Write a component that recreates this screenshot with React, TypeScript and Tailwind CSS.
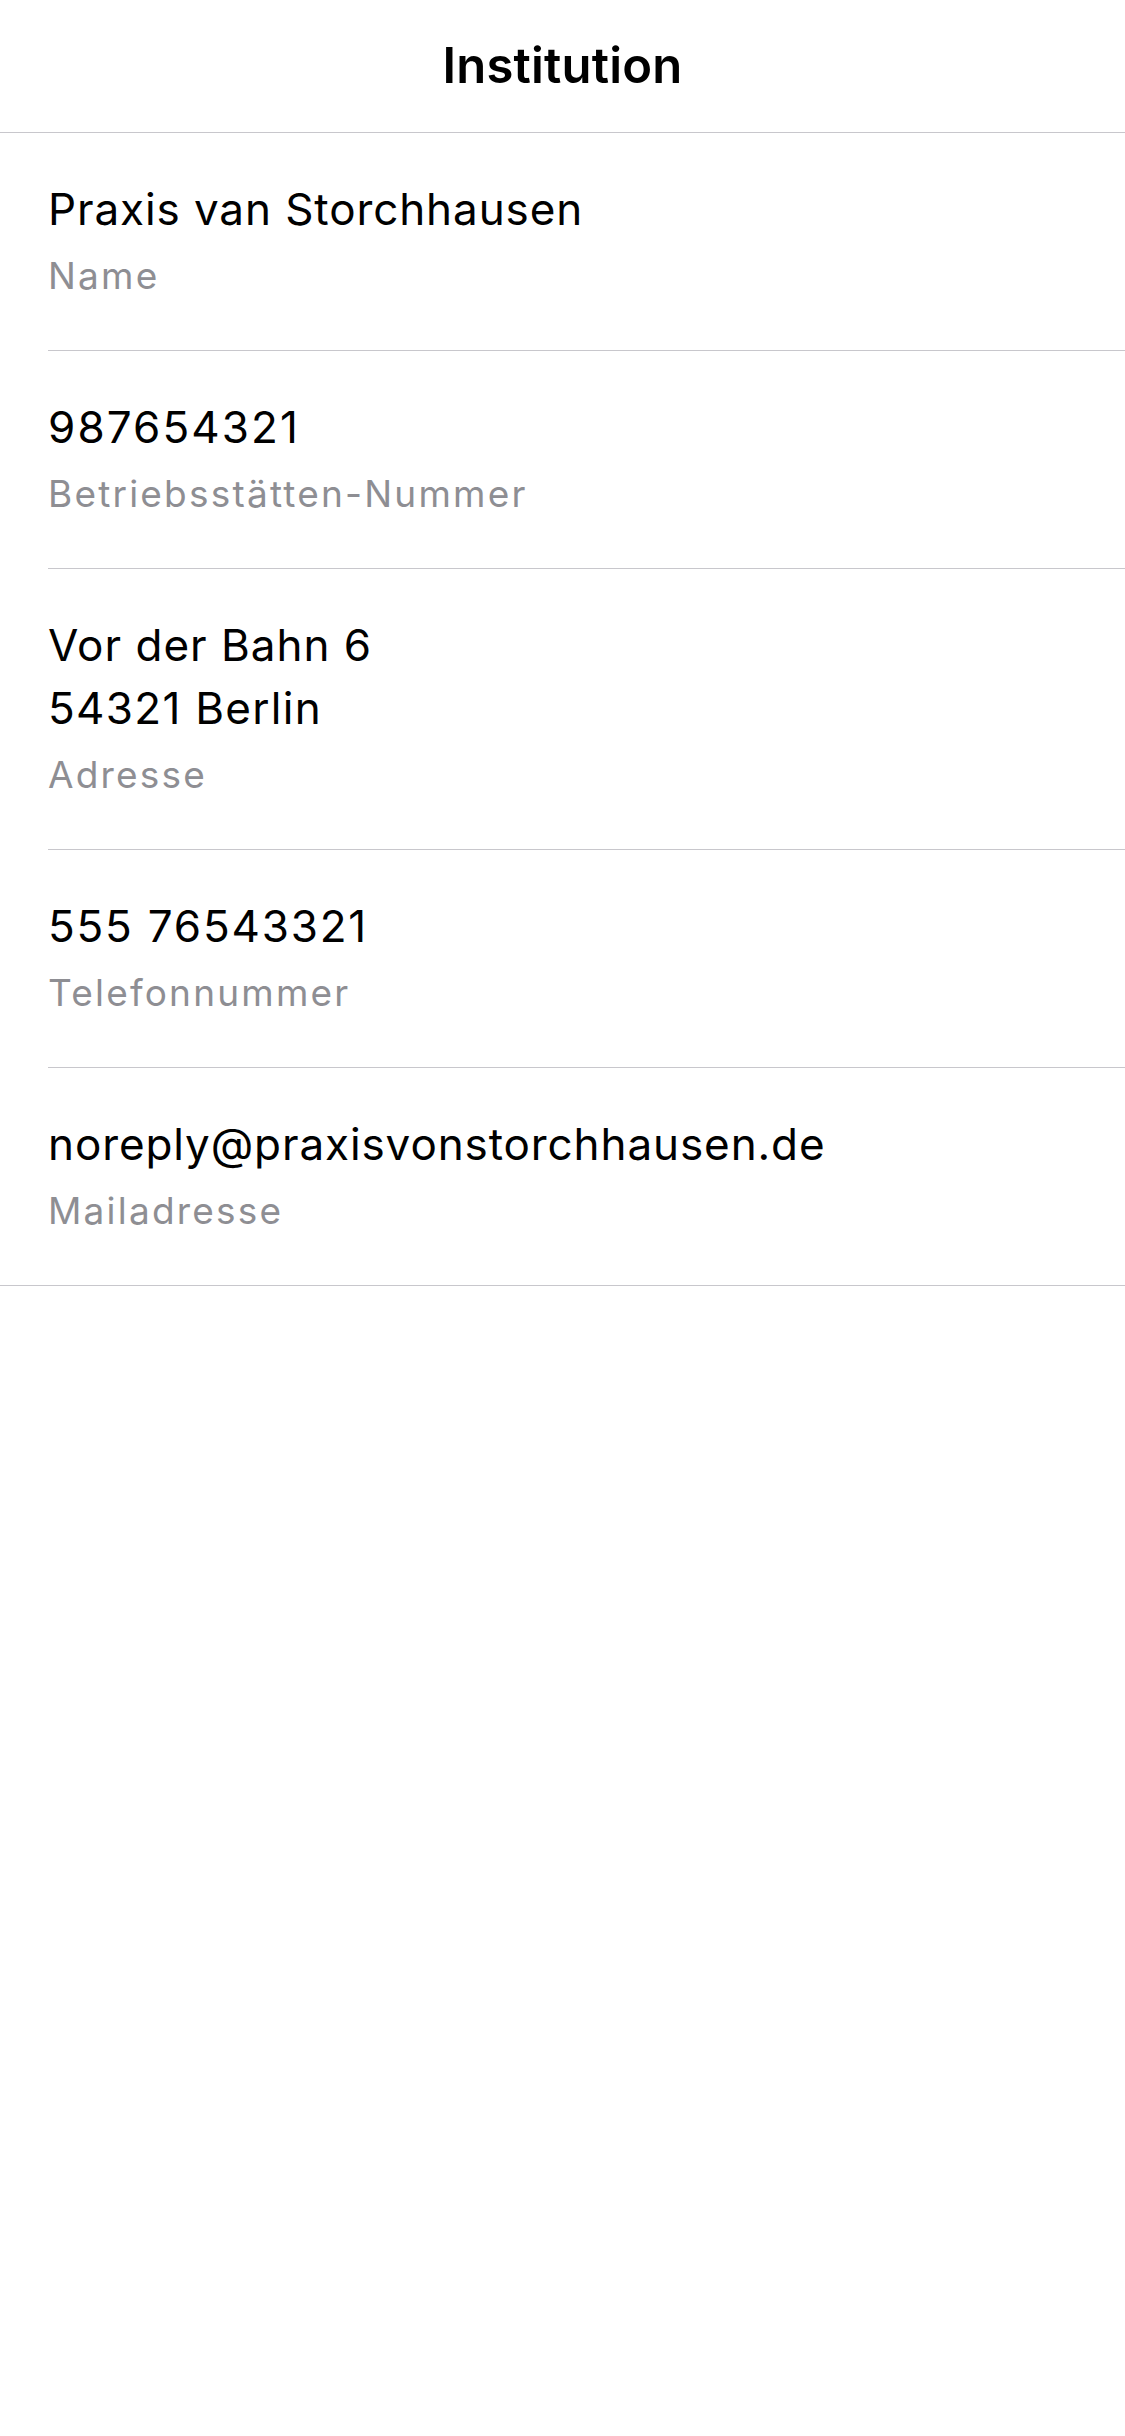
import React from "react";

type Line = { text: string; cls: string };

const rows: { value: Line[]; label: string }[] = [
  { value: [{ text: "Praxis van Storchhausen", cls: "tracking-[0.9px]" }], label: "Name" },
  { value: [{ text: "987654321", cls: "tracking-[2.1px]" }], label: "Betriebsstätten-Nummer" },
  {
    value: [
      { text: "Vor der Bahn 6", cls: "tracking-[1px]" },
      { text: "54321 Berlin", cls: "tracking-[1.3px]" },
    ],
    label: "Adresse",
  },
  { value: [{ text: "555 76543321", cls: "tracking-[1.8px]" }], label: "Telefonnummer" },
  { value: [{ text: "noreply@praxisvonstorchhausen.de", cls: "tracking-[0.9px]" }], label: "Mailadresse" },
];

export default function App() {
  return (
    <div
      className="min-h-[2436px] w-full bg-white text-black"
      style={{ fontFamily: "Inter, 'Liberation Sans', sans-serif" }}
    >
      <header className="flex h-[133px] items-center justify-center border-b border-[#c8c7cc]">
        <h1 className="text-[49px] font-semibold leading-[132px] tracking-[0.2px]">Institution</h1>
      </header>
      <div className="flex flex-col">
        {rows.map((r, i) => (
          <div key={i} className={i === rows.length - 1 ? "border-b border-[#c8c7cc]" : ""}>
            <div className={i === rows.length - 1 ? "pl-[48px]" : "ml-[48px] border-b border-[#c8c7cc]"}>
              <div className="flex flex-col pt-[45px] pb-[52px]">
                {r.value.map((v, j) => (
                  <div key={j} className={`text-[44px] leading-[63px] text-black ${v.cls}`}>
                    {v.text}
                  </div>
                ))}
                <div className="mt-[13px] text-[37px] leading-[44px] tracking-[2.2px] text-[#8e8e93]">{r.label}</div>
              </div>
            </div>
          </div>
        ))}
      </div>
    </div>
  );
}
